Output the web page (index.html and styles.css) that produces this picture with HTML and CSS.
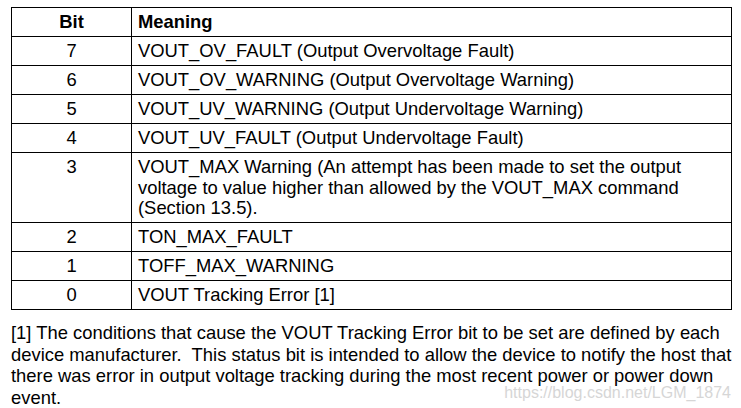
FILE: index.html
```html
<!DOCTYPE html>
<html>
<head>
<meta charset="utf-8">
<link rel="stylesheet" href="styles.css">
</head>
<body>
<div class="page">
  <table class="bits">
    <thead>
      <tr><th class="c-bit">Bit</th><th class="c-mean">Meaning</th></tr>
    </thead>
    <tbody>
      <tr><td class="c-bit">7</td><td class="c-mean">VOUT_OV_FAULT (Output Overvoltage Fault)</td></tr>
      <tr><td class="c-bit">6</td><td class="c-mean">VOUT_OV_WARNING (Output Overvoltage Warning)</td></tr>
      <tr><td class="c-bit">5</td><td class="c-mean">VOUT_UV_WARNING (Output Undervoltage Warning)</td></tr>
      <tr><td class="c-bit">4</td><td class="c-mean">VOUT_UV_FAULT (Output Undervoltage Fault)</td></tr>
      <tr><td class="c-bit">3</td><td class="c-mean">VOUT_MAX Warning (An attempt has been made to set the output<br>voltage to value higher than allowed by the VOUT_MAX command<br>(Section 13.5).</td></tr>
      <tr><td class="c-bit">2</td><td class="c-mean">TON_MAX_FAULT</td></tr>
      <tr><td class="c-bit">1</td><td class="c-mean">TOFF_MAX_WARNING</td></tr>
      <tr><td class="c-bit">0</td><td class="c-mean">VOUT Tracking Error [1]</td></tr>
    </tbody>
  </table>
  <div class="note">
    <p>[1] The conditions that cause the VOUT Tracking Error bit to be set are defined by each<br>device manufacturer.&nbsp; This status bit is intended to allow the device to notify the host that<br>there was error in output voltage tracking during the most recent power or power down<br>event.</p>
    <span class="mark">https://blog.csdn.net/LGM_1874</span>
  </div>
</div>
</body>
</html>
```
FILE: styles.css
```css
html, body {
  margin: 0;
  padding: 0;
  background: #fff;
}
body {
  font-family: "Liberation Sans", Arial, sans-serif;
  font-size: 18.4px;
  color: #000;
}
.page {
  padding: 7px 10px 0 11px;
}
.bits {
  border-collapse: collapse;
  width: 721px;
}
.bits th, .bits td {
  border: 1px solid #000;
  line-height: 20.5px;
  padding: 4px 6px 3.5px 6px;
  vertical-align: top;
}
.bits th {
  font-weight: bold;
}
.c-bit {
  width: 107px;
  text-align: center;
}
.c-mean {
  text-align: left;
}
.note {
  position: relative;
  margin-top: 12px;
}
.note p {
  margin: 0;
  line-height: 21.7px;
  white-space: nowrap;
}
.mark {
  position: absolute;
  right: 0;
  bottom: 7px;
  color: #d6d6d6;
  font-size: 16px;
}
```
